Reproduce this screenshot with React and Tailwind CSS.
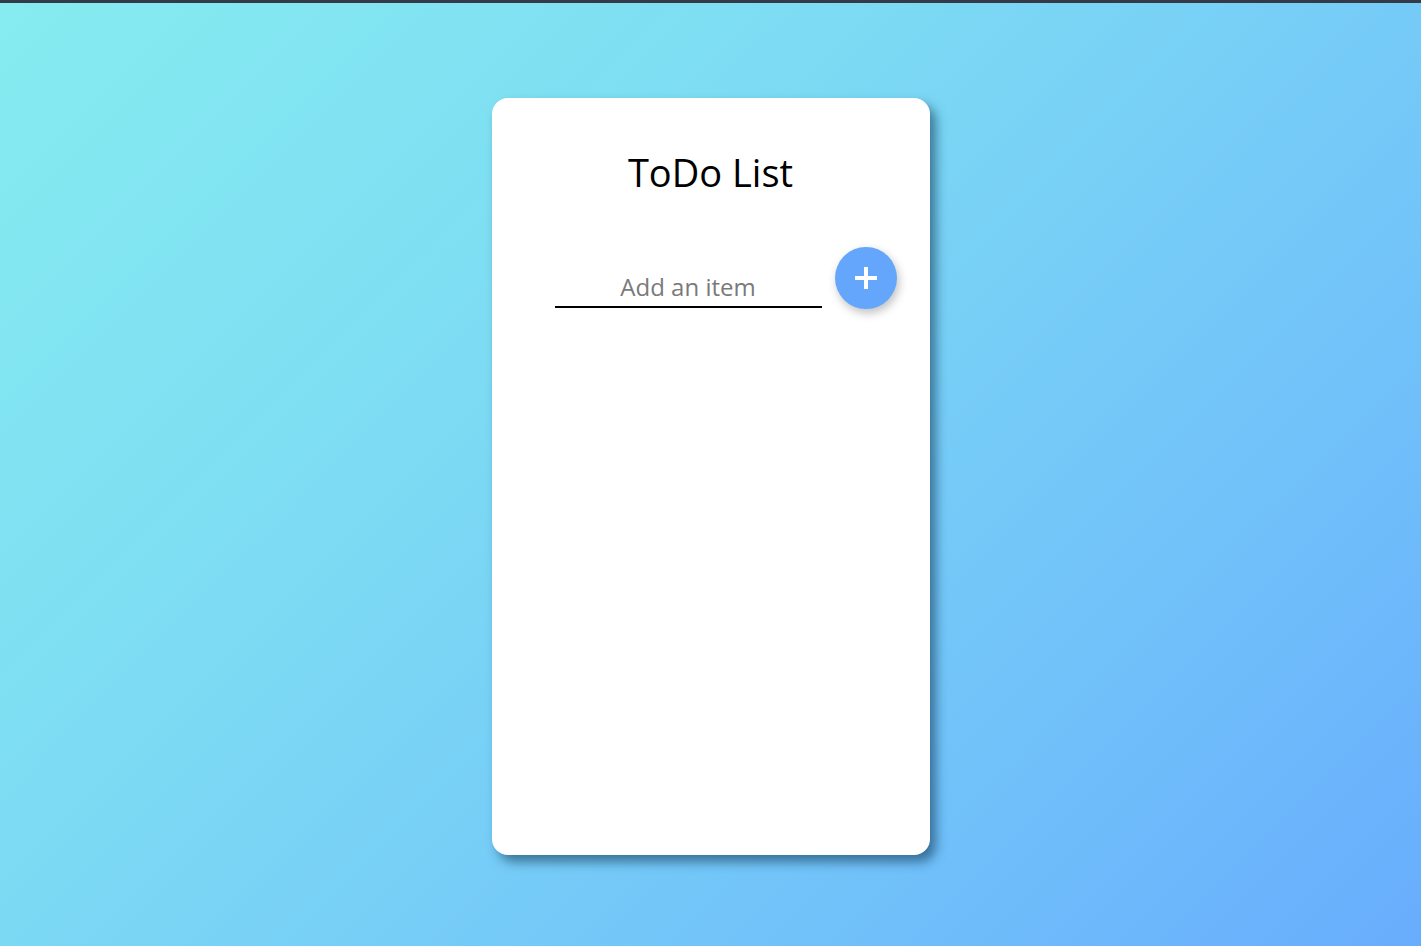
import React, { useState } from 'react'

const App = () => {
    const [item, setItem] = useState('')

    return (
        <div className="min-h-screen w-full border-t-[3px] border-[#343a48] bg-[linear-gradient(135deg,#86ecf0_0%,#7ddcf3_35%,#72c4f9_70%,#68adfd_100%)] font-['Open_Sans',sans-serif]">
            <div className="flex justify-center pt-[95px]">
                <div className="flex h-[757px] w-[438px] flex-col rounded-[16px] bg-white shadow-[6px_7px_11px_rgba(20,60,90,0.6)]">
                    <h1 className="mt-[48px] text-center text-[38px] leading-[52px] font-normal text-black">
                        ToDo List
                    </h1>
                    <div className="mt-[49px] flex items-start pl-[63px]">
                        <input
                            type="text"
                            value={item}
                            onChange={(e) => setItem(e.target.value)}
                            placeholder="Add an item"
                            className="mt-[20px] h-[41px] w-[267px] border-b-2 border-black bg-transparent pb-[1px] text-center text-[24px] text-gray-700 outline-none placeholder:text-[#7a7a7a]"
                        />
                        <button
                            type="button"
                            className="ml-[13px] flex h-[62px] w-[62px] items-center justify-center rounded-full bg-[#63a6fc] text-white shadow-[2px_4px_10px_rgba(0,0,0,0.25)]"
                        >
                            <svg width="26" height="26" viewBox="0 0 26 26">
                                <path d="M13 2v22M2 13h22" stroke="white" strokeWidth="4" strokeLinecap="butt" />
                            </svg>
                        </button>
                    </div>
                </div>
            </div>
        </div>
    )
}

export default App
